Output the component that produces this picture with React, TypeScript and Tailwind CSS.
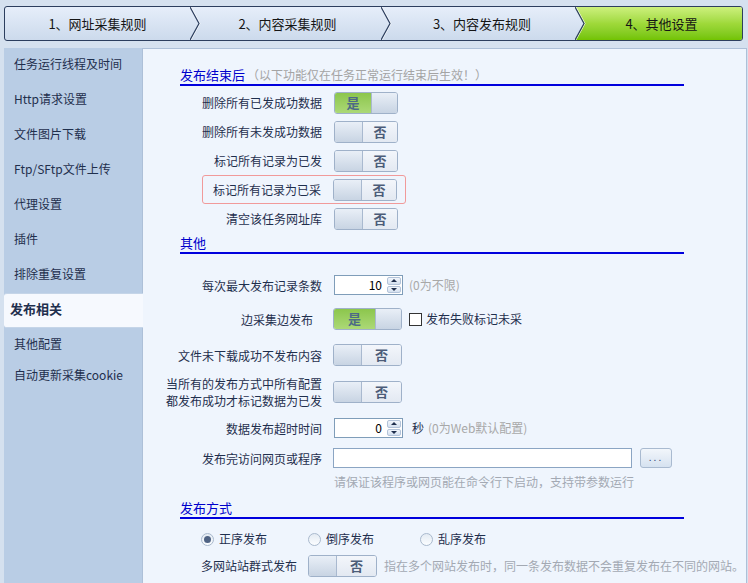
import type { ReactNode } from "react";

const sideItems = [
  "任务运行线程及时间",
  "Http请求设置",
  "文件图片下载",
  "Ftp/SFtp文件上传",
  "代理设置",
  "插件",
  "排除重复设置",
  "发布相关",
  "其他配置",
  "自动更新采集cookie",
];

function Chevron() {
  return (
    <svg
      className="absolute top-0 left-full z-10"
      width="11"
      height="33"
      viewBox="0 0 11 33"
    >
      <polyline points="1,0 10,16.5 1,33" fill="none" stroke="#ffffff" strokeOpacity="0.8" strokeWidth="1" />
      <polyline points="0,0 9,16.5 0,33" fill="none" stroke="#2c3e5e" strokeWidth="1.2" />
    </svg>
  );
}

function Switch({ on, wide }: { on: boolean; wide?: boolean }) {
  return (
    <div
      className={`flex h-[22px] overflow-hidden rounded-[3px] border border-[#9fb1c9] ${
        wide ? "w-[69px]" : "w-[64px]"
      }`}
    >
      {on ? (
        <>
          <div className="flex flex-1 items-center justify-center bg-linear-to-b from-[#8cc64c] to-[#acd976] text-[13px] font-bold text-[#4d6a86]">
            是
          </div>
          <div className="w-[26px] border-l border-[#a9b9cf] bg-linear-to-b from-[#e9eff7] to-[#c8d4e3]" />
        </>
      ) : (
        <>
          <div className="w-[28px] border-r border-[#a9b9cf] bg-linear-to-b from-[#e9eff7] to-[#c8d4e3]" />
          <div className="flex flex-1 items-center justify-center bg-linear-to-b from-[#f3f6fb] to-[#e3e9f2] text-[13px] font-bold text-[#4c5c78]">
            否
          </div>
        </>
      )}
    </div>
  );
}

function Spin({ value }: { value: string }) {
  return (
    <div className="flex h-[20px] w-[69px] border border-[#7f9db9] bg-white">
      <div className="flex-1 pr-[4px] text-right leading-[18px] text-black">{value}</div>
      <div className="flex w-[16px] flex-col gap-[1px] p-[1px]">
        <div className="flex flex-1 items-center justify-center rounded-[2px] border border-[#b3c3d9] bg-linear-to-b from-[#f2f6fc] to-[#d4e0ef]">
          <div className="h-0 w-0 border-x-[3px] border-b-[3px] border-x-transparent border-b-[#1f2f4d]" />
        </div>
        <div className="flex flex-1 items-center justify-center rounded-[2px] border border-[#b3c3d9] bg-linear-to-b from-[#f2f6fc] to-[#d4e0ef]">
          <div className="h-0 w-0 border-x-[3px] border-t-[3px] border-x-transparent border-t-[#1f2f4d]" />
        </div>
      </div>
    </div>
  );
}

function Radio({ checked, label }: { checked?: boolean; label: string }) {
  return (
    <div className="flex items-center gap-[5px]">
      <div className="flex h-[13px] w-[13px] items-center justify-center rounded-full border border-[#a9b9cd] bg-linear-to-b from-[#e4ebf3] to-[#fbfdff]">
        {checked && <div className="h-[7px] w-[7px] rounded-full bg-[#4f6384]" />}
      </div>
      <span>{label}</span>
    </div>
  );
}

function Header({ title, note }: { title: string; note?: string }) {
  return (
    <div className="ml-[37px] flex h-[21px] w-[504px] items-center border-b-2 border-[#0000dd]">
      <span className="text-[13px] text-[#0000cc]">{title}</span>
      {note && <span className="ml-[2px] text-[#a4a4a4]">{note}</span>}
    </div>
  );
}

function Row({
  label,
  children,
  pr = "",
  h = "h-[29px]",
  gap = "ml-[12px]",
  leading = "leading-[15px]",
}: {
  label: ReactNode;
  children: ReactNode;
  pr?: string;
  h?: string;
  gap?: string;
  leading?: string;
}) {
  return (
    <div className={`flex items-center ${h}`}>
      <div className={`w-[179px] shrink-0 text-right ${leading} ${pr}`}>{label}</div>
      <div className={`flex items-center ${gap}`}>{children}</div>
    </div>
  );
}

export default function App() {
  return (
    <div className="flex h-[583px] w-[748px] flex-col overflow-hidden bg-[#d5e1ef] pt-[6px] font-['Noto_Sans_CJK_SC',sans-serif] text-[12px] text-[#1f2f4d]">
      {/* step tabs */}
      <div className="ml-[4px] flex h-[35px] w-[739px] overflow-hidden rounded-[3px] border border-[#2c3e5e] bg-linear-to-b from-[#e6eefa] to-[#ccdaec] text-[13px] text-[#151515]">
        <div className="relative flex w-[185px] items-center justify-center">
          1、网址采集规则
          <Chevron />
        </div>
        <div className="relative flex w-[191px] items-center justify-center pl-[4px]">
          2、内容采集规则
          <Chevron />
        </div>
        <div className="relative flex w-[194px] items-center justify-center pl-[8px]">
          3、内容发布规则
          <Chevron />
        </div>
        <div className="flex flex-1 items-center justify-center bg-linear-to-b from-[#cdf07c] via-[#9fd93a] to-[#72c300] pl-[6px] [clip-path:polygon(0_0,100%_0,100%_100%,0_100%,9px_50%)]">
          4、其他设置
        </div>
      </div>

      <div className="mt-[7px] flex flex-1">
        {/* sidebar */}
        <div className="ml-[4px] w-[138px] bg-[#b9cde5]">
          {sideItems.map((item, i) =>
            item === "发布相关" ? (
              <div
                key={item}
                className="relative z-10 -mr-[1px] flex h-[35px] items-center rounded-l-[3px] border-y border-[#c5d5e8] bg-[#f6f9fe] pb-[3px] pl-[6px] text-[13px] font-bold"
              >
                {item}
              </div>
            ) : (
              <div
                key={item}
                className={`flex items-center pb-[4px] pl-[10px] ${i === sideItems.length - 1 ? "h-[27px]" : "h-[35px]"}`}
              >
                {item}
              </div>
            ),
          )}
        </div>

        {/* main panel */}
        <div className="flex w-[605px] flex-col border border-b-0 border-[#adc0d8] bg-[#eff5fd]">
          <div className="h-[16px]" />
          <Header title="发布结束后" note="（以下功能仅在任务正常运行结束后生效！）" />
          <div className="mt-[2px]">
            <Row label="删除所有已发成功数据">
              <Switch on />
            </Row>
            <Row label="删除所有未发成功数据">
              <Switch on={false} />
            </Row>
            <Row label="标记所有记录为已发">
              <Switch on={false} />
            </Row>
            <div className="ml-[59px] flex h-[29px] w-[204px] items-center rounded-[3px] border border-[#f19a9a]">
              <div className="w-[118px] text-right">标记所有记录为已采</div>
              <div className="ml-[12px]">
                <Switch on={false} />
              </div>
            </div>
            <Row label="清空该任务网址库">
              <Switch on={false} />
            </Row>
          </div>

          <Header title="其他" />
          <div className="mt-[21px]">
            <Row label="每次最大发布记录条数" h="h-[20px]">
              <Spin value="10" />
              <span className="ml-[6px] text-[#a8a8a8]">(0为不限)</span>
            </Row>
          </div>
          <div className="mt-[13px]">
            <Row label="边采集边发布" pr="pr-[9px]" h="h-[22px]" gap="ml-[11px]">
              <Switch on wide />
              <div className="ml-[7px] h-[13px] w-[13px] border border-[#333333] bg-white" />
              <span className="ml-[4px]">发布失败标记未采</span>
            </Row>
          </div>
          <div className="mt-[14px]">
            <Row label="文件未下载成功不发布内容" h="h-[22px]" gap="ml-[11px]">
              <Switch on={false} wide />
            </Row>
          </div>
          <div className="mt-[11px]">
            <Row
              label={
                <>
                  当所有的发布方式中所有配置
                  <br />
                  都发布成功才标记数据为已发
                </>
              }
              h="h-[30px]"
              gap="ml-[11px]"
              leading="leading-[17px]"
            >
              <Switch on={false} wide />
            </Row>
          </div>
          <div className="mt-[11px]">
            <Row label="数据发布超时时间" h="h-[20px]">
              <Spin value="0" />
              <span className="ml-[9px]">秒</span>
              <span className="ml-[4px] text-[#a8a8a8]">(0为Web默认配置)</span>
            </Row>
          </div>
          <div className="mt-[10px]">
            <Row label="发布完访问网页或程序" h="h-[20px]" gap="ml-[11px]">
              <div className="h-[20px] w-[299px] border border-[#8ba5c3] bg-white" />
              <div className="ml-[8px] flex h-[20px] w-[32px] items-center justify-center rounded-[3px] border border-[#a9bad0] bg-linear-to-b from-[#f2f6fb] to-[#d6e2f0] pb-[3px] text-[10px] tracking-[2px] text-[#3a4a7a]">
                ...
              </div>
            </Row>
          </div>
          <div className="ml-[191px] mt-[6px] h-[16px] leading-[16px] text-[#a3a9b3]">
            请保证该程序或网页能在命令行下启动，支持带参数运行
          </div>

          <div className="mt-[8px]">
            <Header title="发布方式" />
          </div>
          <div className="ml-[58px] mt-[12px] flex h-[16px] items-center">
            <div className="w-[107px]">
              <Radio checked label="正序发布" />
            </div>
            <div className="w-[112px]">
              <Radio label="倒序发布" />
            </div>
            <Radio label="乱序发布" />
          </div>
          <div className="mt-[8px] flex h-[22px] items-center">
            <div className="w-[154px] text-right">多网站站群式发布</div>
            <div className="ml-[11px]">
              <Switch on={false} wide />
            </div>
            <span className="ml-[7px] text-[#a3a9b3]">指在多个网站发布时，同一条发布数据不会重复发布在不同的网站。</span>
          </div>
        </div>
      </div>
    </div>
  );
}
